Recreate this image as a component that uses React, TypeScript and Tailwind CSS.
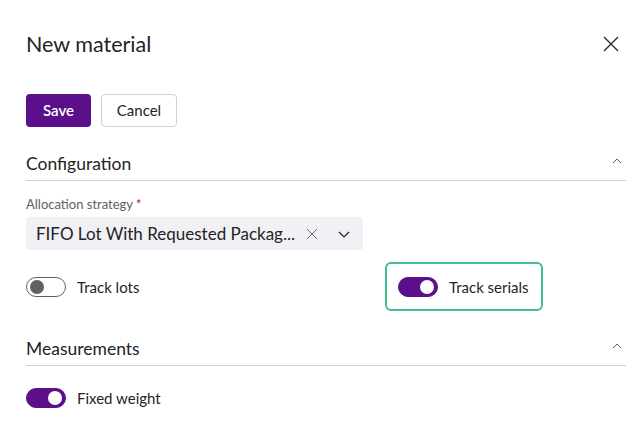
import React, { useState } from 'react';

const font = { fontFamily: '"Segoe UI", Lato, "Noto Sans", sans-serif' };

const Toggle = ({ on, onClick }: { on: boolean; onClick: () => void }) => (
    <button
        type="button"
        onClick={onClick}
        className={`w-10 h-5 rounded-full flex items-center px-[3px] shrink-0 ${on ? 'bg-[#5c0f8b] border border-[#5c0f8b] justify-end' : 'bg-white border border-[#616161] justify-start'}`}
    >
        <span className={`w-[14px] h-[14px] rounded-full ${on ? 'bg-white' : 'bg-[#616161]'}`} />
    </button>
);

const ChevronUp = () => (
    <svg width="12" height="12" viewBox="0 0 12 12" fill="none" stroke="#616161" strokeWidth="1">
        <path d="M2 8 L6 4 L10 8" />
    </svg>
);

const SectionHeader = ({ title }: { title: string }) => (
    <div className="flex items-center justify-between border-b border-[#d1d1d1] pb-[3px]">
        <span className="text-[17.5px] leading-[26px] text-[#242424]">{title}</span>
        <span className="pr-[3px] -mt-[6px]"><ChevronUp /></span>
    </div>
);

export default function App() {
    const [lots, setLots] = useState(false);
    const [serials, setSerials] = useState(true);
    const [weight, setWeight] = useState(true);

    return (
        <div className="w-[641px] h-[425px] bg-white pl-[26px] pr-[15px] text-[#242424]" style={font}>
            <div className="flex items-center justify-between pt-[30px]">
                <h1 className="text-[21.5px] leading-[28px] font-normal">New material</h1>
                <svg width="16" height="16" viewBox="0 0 16 16" className="mr-[7px]" stroke="#242424" strokeWidth="1.3">
                    <path d="M1 1 L15 15 M15 1 L1 15" />
                </svg>
            </div>

            <div className="flex gap-[10px] mt-[36px]">
                <button className="h-[33px] w-[65px] rounded-[4px] bg-[#5c0f8b] text-white text-[15px] font-semibold">Save</button>
                <button className="h-[33px] w-[76px] rounded-[4px] bg-white border border-[#d1d1d1] text-[15px]">Cancel</button>
            </div>

            <div className="mt-[24px]">
                <SectionHeader title="Configuration" />
            </div>

            <div className="mt-[14px] text-[13px] leading-[18px] text-[#616161]">
                Allocation strategy <span className="text-[#c50f1f]">*</span>
            </div>
            <div className="mt-[4px] w-[337px] h-[33px] rounded-[4px] bg-[#f0f0f5] flex items-center pl-[10px] pr-[12px]">
                <span className="flex-1 text-[17px] text-[#242424] whitespace-nowrap">FIFO Lot With Requested Packag...</span>
                <svg width="12" height="12" viewBox="0 0 12 12" stroke="#707070" strokeWidth="1" className="mr-[19px]">
                    <path d="M1 1 L11 11 M11 1 L1 11" />
                </svg>
                <svg width="14" height="14" viewBox="0 0 14 14" fill="none" stroke="#242424" strokeWidth="1.2">
                    <path d="M2 5 L7 10 L12 5" />
                </svg>
            </div>

            <div className="flex items-center mt-[27px] h-5">
                <div className="w-[372px] flex items-center gap-[11px]">
                    <Toggle on={lots} onClick={() => setLots(!lots)} />
                    <span className="text-[15px]">Track lots</span>
                </div>
                <div className="relative flex items-center gap-[11px]">
                    <div className="absolute -left-[13px] -top-[14px] -bottom-[13px] -right-[14px] border-2 border-[#3fbf8c] rounded-[6px] pointer-events-none" />
                    <Toggle on={serials} onClick={() => setSerials(!serials)} />
                    <span className="text-[15px]">Track serials</span>
                </div>
            </div>

            <div className="mt-[39px]">
                <SectionHeader title="Measurements" />
            </div>

            <div className="flex items-center gap-[11px] mt-[21px]">
                <Toggle on={weight} onClick={() => setWeight(!weight)} />
                <span className="text-[15px]">Fixed weight</span>
            </div>
        </div>
    );
}
